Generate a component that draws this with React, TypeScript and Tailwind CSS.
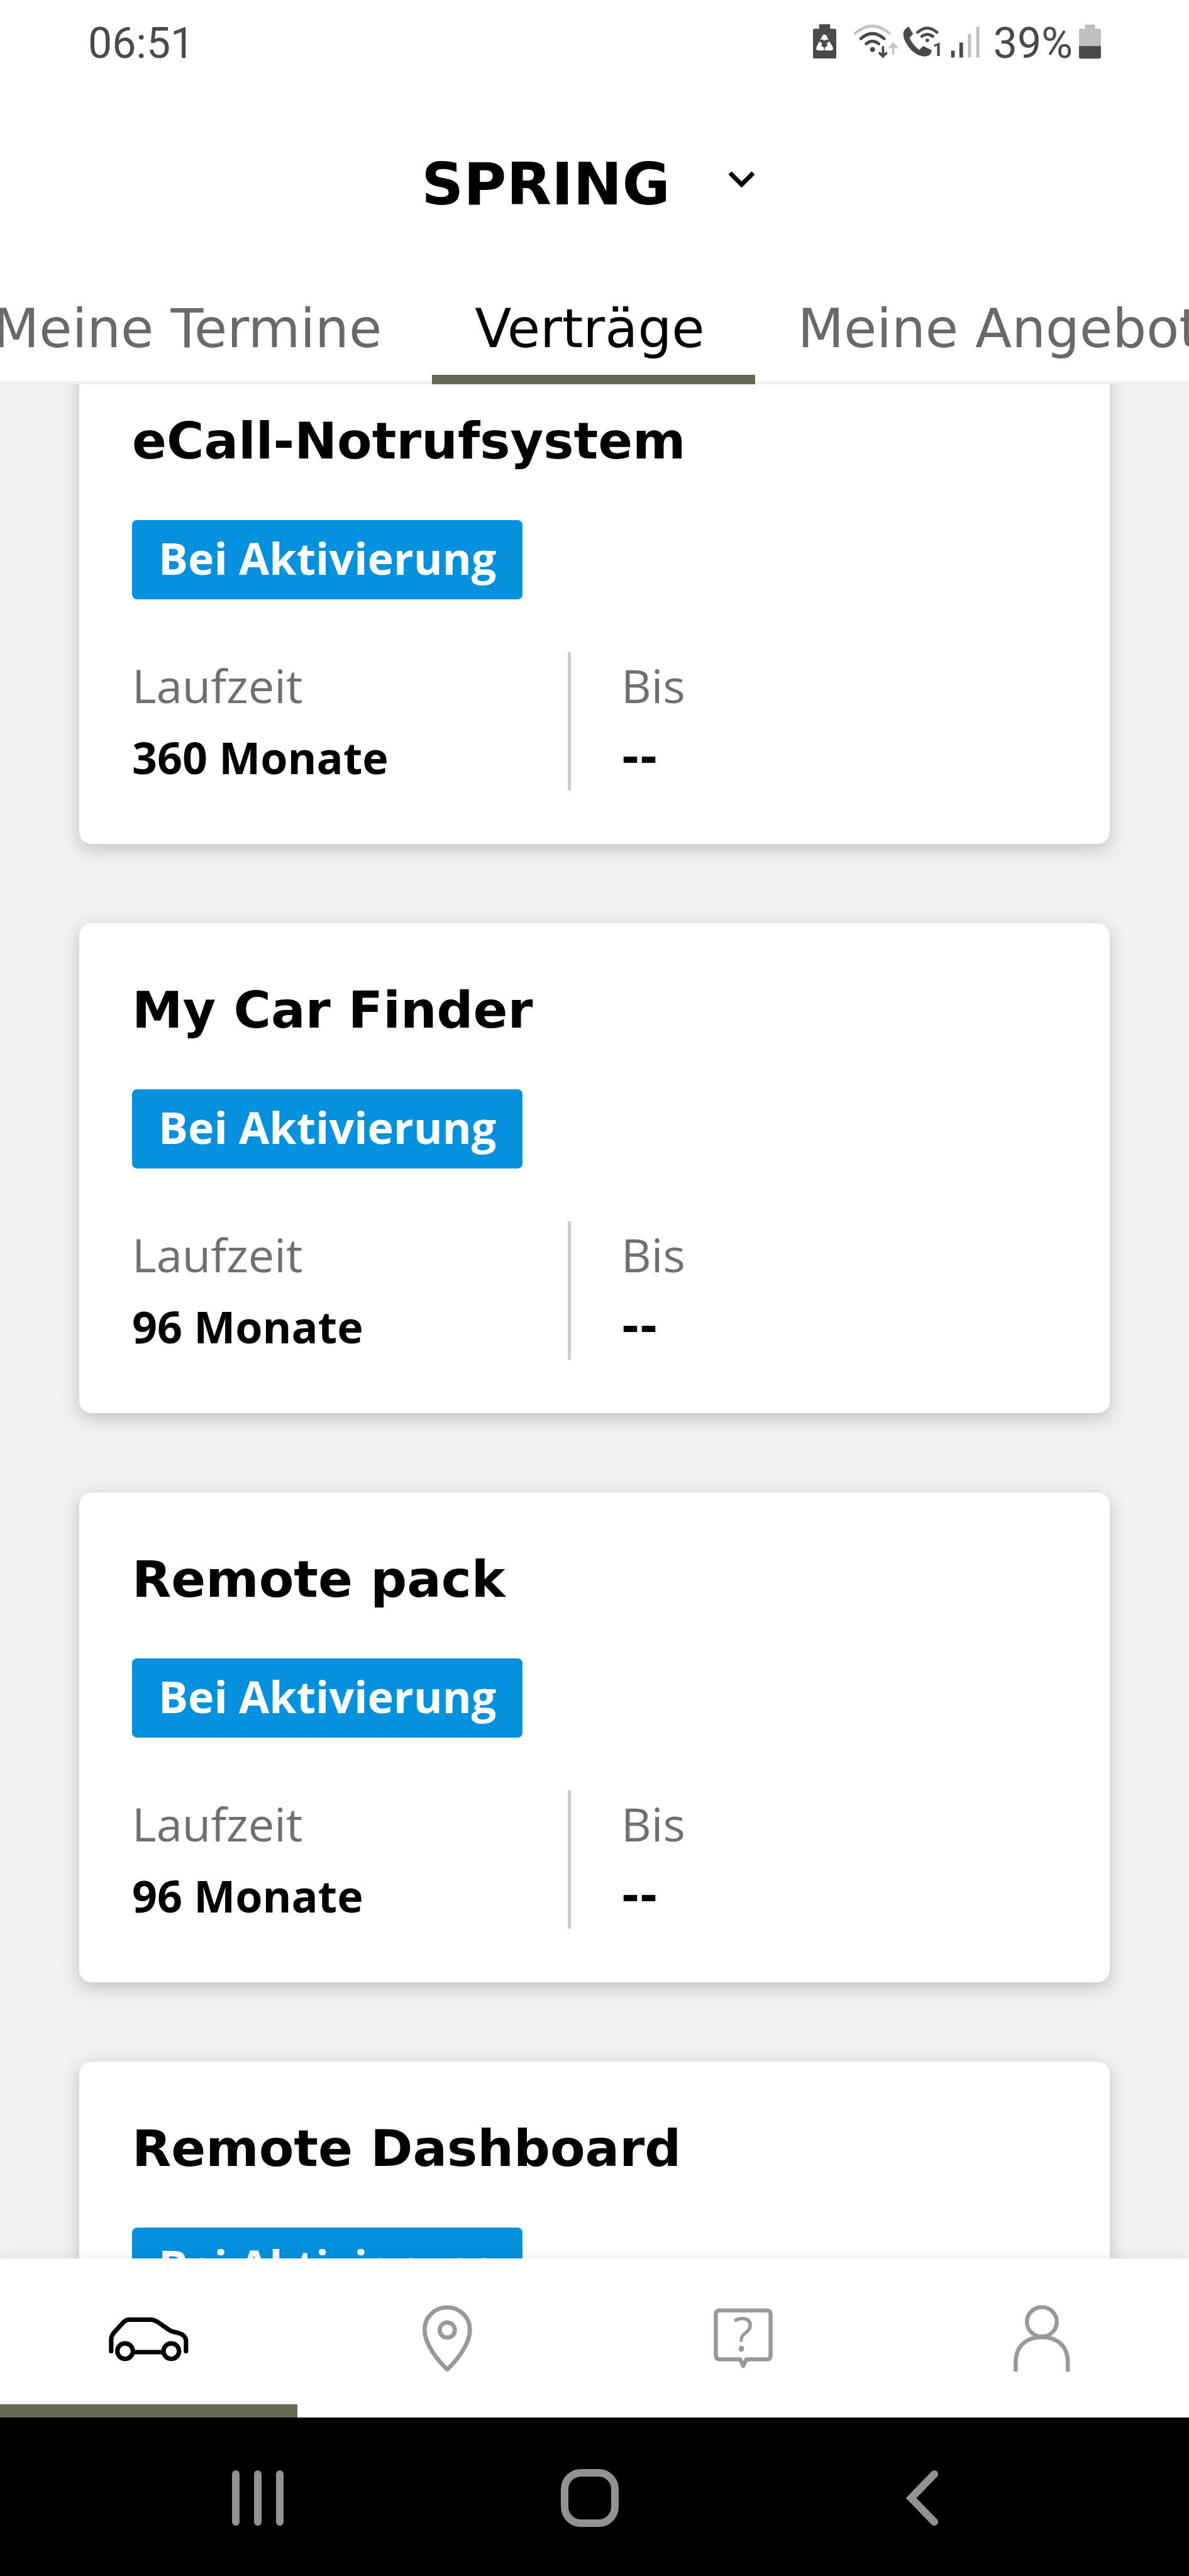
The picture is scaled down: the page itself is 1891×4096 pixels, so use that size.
import React, { useState } from 'react';

interface Contract {
  id: number;
  name: string;
  status: string;
  duration: string;
  until: string;
}

const contracts: Contract[] = [
  { id: 1, name: 'eCall-Notrufsystem', status: 'Bei Aktivierung', duration: '360 Monate', until: '--' },
  { id: 2, name: 'My Car Finder', status: 'Bei Aktivierung', duration: '96 Monate', until: '--' },
  { id: 3, name: 'Remote pack', status: 'Bei Aktivierung', duration: '96 Monate', until: '--' },
  { id: 4, name: 'Remote Dashboard', status: 'Bei Aktivierung', duration: '96 Monate', until: '--' },
];

const tabs = ['Meine Termine', 'Verträge', 'Meine Angebote'];

function StatusBar() {
  return (
    <div className="flex h-[138px] shrink-0 items-center justify-between px-[140px] font-['Roboto',sans-serif] text-[68px] text-[#4a4a4a]">
      <span>06:51</span>
      <div className="flex items-center">
        {/* battery saver */}
        <svg className="mr-7 h-[62px] w-[37px]" viewBox="75 57 114 190" fill="none">
          <path d="M105 58h54v22h22q8 0 8 8v130q0 8-8 8H83q-8 0-8-8V88q0-8 8-8h22z" fill="#4a4a4a" />
          <path d="M110 136 122 113q9-9 18 0l12 23-12-3-9 6-9-6z" fill="#fff" />
          <path d="M106 142l14 10-4 12 13 8v15h-29q-12-2-9-14zM156 142l-14 10 4 12-13 8v15h31q12-2 9-14z" fill="#fff" />
        </svg>
        {/* wifi */}
        <svg className="mr-2 h-[62px] w-[70px]" viewBox="275 57 215 190" fill="none" strokeLinecap="round">
          <path d="M283 102q82-70 164 0" stroke="#c4c4c4" strokeWidth="14" />
          <path d="M309 129q56-50 114 0" stroke="#4a4a4a" strokeWidth="15" />
          <path d="M335 154q30-26 62 0" stroke="#4a4a4a" strokeWidth="15" />
          <circle cx="366" cy="182" r="12" fill="#4a4a4a" />
          <path d="M417 170v44m-16-14 16 16 16-16" stroke="#4a4a4a" strokeWidth="12" />
          <path d="M467 202v-46m-16 16 16-18 16 18" stroke="#c4c4c4" strokeWidth="11" />
        </svg>
        {/* wifi calling */}
        <svg className="mr-4 h-[62px] w-[60px] overflow-visible" viewBox="513 57 184 190" fill="none">
          <path d="M541 70 563 106 545 125Q560 157 592 184L612 164 654 186Q650 214 622 216 575 214 540 168 510 128 516 96 522 80 541 70z" fill="#4a4a4a" />
          <path d="M585 98q46-42 94 0M605 118q26-20 54 0" stroke="#4a4a4a" strokeWidth="14" strokeLinecap="round" />
          <circle cx="632" cy="137" r="9" fill="#4a4a4a" />
          <text x="658" y="214" fontSize="88" fontWeight="700" fill="#4a4a4a">1</text>
        </svg>
        {/* signal */}
        <svg className="mr-[22px] h-[62px] w-[46px]" viewBox="742 57 143 190">
          <rect x="744" y="188" width="18" height="34" rx="3" fill="#4a4a4a" />
          <rect x="785" y="147" width="18" height="75" rx="3" fill="#4a4a4a" />
          <rect x="827" y="106" width="16" height="116" rx="3" fill="#c0c0c0" />
          <rect x="868" y="70" width="16" height="152" rx="3" fill="#c0c0c0" />
        </svg>
        <span>39%</span>
        <svg className="ml-2.5 h-[62px] w-[35px]" viewBox="1383 57 107 190">
          <path d="M1411 60h50v20h22q7 0 7 7v80h-107V87q0-7 7-7h21z" fill="#c0c0c0" />
          <path d="M1383 165h107v53q0 8-8 8h-91q-8 0-8-8z" fill="#4a4a4a" />
        </svg>
      </div>
    </div>
  );
}

function ContractCard({ contract }: { contract: Contract }) {
  return (
    <article className="shrink-0 rounded-[20px] bg-white px-[84px] pt-[90px] pb-[85px] shadow-[0_8px_28px_rgba(0,0,0,0.2)]">
      <h2 className="mb-[78px] font-['DejaVu_Sans',sans-serif] text-[81px] leading-[96px] font-bold">
        {contract.name}
      </h2>
      <span className="flex h-[126px] w-fit items-center rounded-lg bg-[#0390dc] px-[42px] pb-1.5 text-[70px] font-bold text-white">
        {contract.status}
      </span>
      <dl className="mt-[84px] grid grid-cols-[698px_1fr] leading-[105px]">
        <div className="flex flex-col gap-2.5 border-r-[5px] border-[#cccccc]">
          <dt className="text-[74px] text-[#707070]">Laufzeit</dt>
          <dd className="text-[70px] font-bold">{contract.duration}</dd>
        </div>
        <div className="flex flex-col gap-2.5 pl-20">
          <dt className="text-[74px] text-[#707070]">Bis</dt>
          <dd className="font-['DejaVu_Sans',sans-serif] text-[70px] font-bold">{contract.until}</dd>
        </div>
      </dl>
    </article>
  );
}

const navItems = [
  {
    label: 'Fahrzeug',
    icon: (
      <svg className="size-[156px]" viewBox="7 0 480 480" fill="none" stroke="currentColor" strokeWidth="22">
        <path
          d="M65 312V254Q65 238 78 222L122 174Q136 158 154 158H258Q274 158 290 168L350 209Q360 216 376 219 400 223 414 232 431 243 431 264V312"
          strokeLinecap="round"
        />
        <circle cx="133" cy="312" r="38" />
        <circle cx="359" cy="312" r="38" />
        <path d="M171 317H321" />
      </svg>
    ),
  },
  {
    label: 'Standorte',
    icon: (
      <svg className="size-[156px]" viewBox="-7 0 480 480" fill="none" stroke="currentColor" strokeWidth="21">
        <path
          d="M240 402C190 354 129 276 129 207A111 109 0 0 1 351 207C351 276 290 354 240 402z"
          strokeLinejoin="round"
        />
        <circle cx="240" cy="209" r="37" />
      </svg>
    ),
  },
  {
    label: 'Hilfe',
    icon: (
      <svg className="size-[156px]" viewBox="-24 0 480 480" fill="none" stroke="currentColor" strokeWidth="20">
        <path
          d="M102 113H330Q350 113 350 133V332Q350 352 330 352H231L216 384 201 352H102Q82 352 82 332V133Q82 113 102 113z"
          strokeLinejoin="round"
        />
        <text x="216" y="314" textAnchor="middle" fontSize="228" fontWeight="400" fill="currentColor" stroke="none">
          ?
        </text>
      </svg>
    ),
  },
  {
    label: 'Profil',
    icon: (
      <svg className="size-[156px]" viewBox="-7 0 480 480" fill="none" stroke="currentColor" strokeWidth="20">
        <ellipse cx="239" cy="169" rx="73" ry="72" />
        <path d="M111 412V366C111 290 160 244 239 244S366 290 366 366V412" />
      </svg>
    ),
  },
];

export default function App() {
  const [activeTab, setActiveTab] = useState('Verträge');
  const [activeNav, setActiveNav] = useState('Fahrzeug');

  return (
    <div className="flex h-screen flex-col bg-[#f1f1f1] font-['Open_Sans',sans-serif] text-black">
      <header className="z-10 flex shrink-0 flex-col overflow-hidden bg-white">
        <StatusBar />

        <div className="flex h-[311px] items-center justify-center pr-5">
          <button className="flex items-center gap-[92px] font-['DejaVu_Sans',sans-serif] text-[93px] font-bold">
            SPRING
            <svg className="mb-[18px] h-[26px] w-[43px]" viewBox="0 0 43 26" fill="none" stroke="currentColor" strokeWidth="7">
              <path d="M3 3 21.500 21.500 40 3" />
            </svg>
          </button>
        </div>

        <nav className="shadow-[inset_0_-5px_0_#f1f1f1]">
          <div className="-ml-[79px] flex" role="tablist">
            {tabs.map((tab) => (
              <button
                key={tab}
                role="tab"
                aria-selected={activeTab === tab}
                onClick={() => setActiveTab(tab)}
                className={`h-[162px] shrink-0 border-b-[15px] pr-20 pl-[68px] font-['DejaVu_Sans',sans-serif] text-[85px] whitespace-nowrap ${
                  activeTab === tab ? 'border-[#666952] text-black' : 'border-transparent text-[#696969]'
                }`}
              >
                {tab}
              </button>
            ))}
          </div>
        </nav>
      </header>

      <main className="min-h-0 flex-1 overflow-hidden">
        <div className="-mt-12 flex flex-col gap-[126px] px-[126px]">
          {contracts.map((contract) => (
            <ContractCard key={contract.id} contract={contract} />
          ))}
        </div>
      </main>

      <nav className="z-10 grid h-[253px] shrink-0 grid-cols-4 bg-white shadow-[0_0_24px_rgba(0,0,0,0.08)]">
        {navItems.map((item) => (
          <button
            key={item.label}
            aria-label={item.label}
            onClick={() => setActiveNav(item.label)}
            className={`flex items-center justify-center border-b-[21px] pt-4 ${
              activeNav === item.label ? 'border-[#666952] text-black' : 'border-transparent text-[#999999]'
            }`}
          >
            {item.icon}
          </button>
        ))}
      </nav>

      {/* system navigation */}
      <div className="z-10 grid h-[252px] shrink-0 grid-cols-3 bg-black pt-1 pr-[161px] pl-[146px] text-[#929292]">
        <button aria-label="Recents" className="flex items-center justify-center">
          <svg className="h-[88px] w-[82px]" viewBox="0 0 82 88" stroke="currentColor" strokeWidth="12" strokeLinecap="round">
            <path d="M6 6V82M41 6V82M76 6V82" />
          </svg>
        </button>
        <button aria-label="Home" className="flex items-center justify-center">
          <svg className="size-[94px]" viewBox="0 0 94 94" fill="none" stroke="currentColor" strokeWidth="12">
            <rect x="7" y="7" width="80" height="80" rx="26" />
          </svg>
        </button>
        <button aria-label="Back" className="flex items-center justify-center">
          <svg className="h-[88px] w-[52px]" viewBox="0 0 52 88" fill="none" stroke="currentColor" strokeWidth="12" strokeLinecap="round">
            <path d="M46 6 9 44 46 82" />
          </svg>
        </button>
      </div>
    </div>
  );
}
